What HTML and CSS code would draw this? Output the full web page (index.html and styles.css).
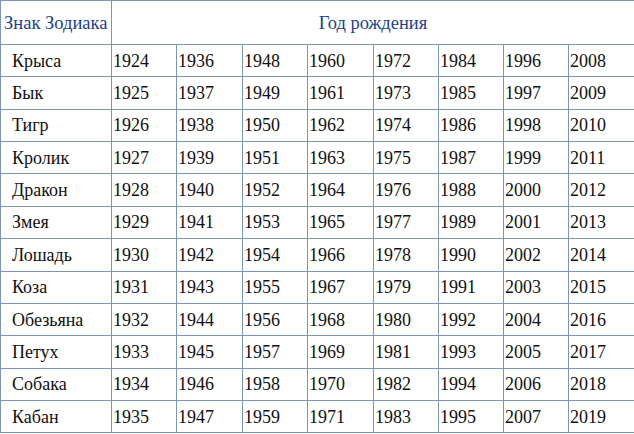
FILE: index.html
```html
<!DOCTYPE html>
<html lang="ru">
<head>
<meta charset="utf-8">
<link rel="stylesheet" href="styles.css">
</head>
<body>
<div class="zodiac">
  <div class="cell head sign-head">Знак Зодиака</div>
  <div class="cell head years-head">Год рождения</div>

  <div class="cell name">Крыса</div>
  <div class="cell">1924</div><div class="cell">1936</div><div class="cell">1948</div><div class="cell">1960</div><div class="cell">1972</div><div class="cell">1984</div><div class="cell">1996</div><div class="cell">2008</div>

  <div class="cell name">Бык</div>
  <div class="cell">1925</div><div class="cell">1937</div><div class="cell">1949</div><div class="cell">1961</div><div class="cell">1973</div><div class="cell">1985</div><div class="cell">1997</div><div class="cell">2009</div>

  <div class="cell name">Тигр</div>
  <div class="cell">1926</div><div class="cell">1938</div><div class="cell">1950</div><div class="cell">1962</div><div class="cell">1974</div><div class="cell">1986</div><div class="cell">1998</div><div class="cell">2010</div>

  <div class="cell name">Кролик</div>
  <div class="cell">1927</div><div class="cell">1939</div><div class="cell">1951</div><div class="cell">1963</div><div class="cell">1975</div><div class="cell">1987</div><div class="cell">1999</div><div class="cell">2011</div>

  <div class="cell name">Дракон</div>
  <div class="cell">1928</div><div class="cell">1940</div><div class="cell">1952</div><div class="cell">1964</div><div class="cell">1976</div><div class="cell">1988</div><div class="cell">2000</div><div class="cell">2012</div>

  <div class="cell name">Змея</div>
  <div class="cell">1929</div><div class="cell">1941</div><div class="cell">1953</div><div class="cell">1965</div><div class="cell">1977</div><div class="cell">1989</div><div class="cell">2001</div><div class="cell">2013</div>

  <div class="cell name">Лошадь</div>
  <div class="cell">1930</div><div class="cell">1942</div><div class="cell">1954</div><div class="cell">1966</div><div class="cell">1978</div><div class="cell">1990</div><div class="cell">2002</div><div class="cell">2014</div>

  <div class="cell name">Коза</div>
  <div class="cell">1931</div><div class="cell">1943</div><div class="cell">1955</div><div class="cell">1967</div><div class="cell">1979</div><div class="cell">1991</div><div class="cell">2003</div><div class="cell">2015</div>

  <div class="cell name">Обезьяна</div>
  <div class="cell">1932</div><div class="cell">1944</div><div class="cell">1956</div><div class="cell">1968</div><div class="cell">1980</div><div class="cell">1992</div><div class="cell">2004</div><div class="cell">2016</div>

  <div class="cell name">Петух</div>
  <div class="cell">1933</div><div class="cell">1945</div><div class="cell">1957</div><div class="cell">1969</div><div class="cell">1981</div><div class="cell">1993</div><div class="cell">2005</div><div class="cell">2017</div>

  <div class="cell name">Собака</div>
  <div class="cell">1934</div><div class="cell">1946</div><div class="cell">1958</div><div class="cell">1970</div><div class="cell">1982</div><div class="cell">1994</div><div class="cell">2006</div><div class="cell">2018</div>

  <div class="cell name">Кабан</div>
  <div class="cell">1935</div><div class="cell">1947</div><div class="cell">1959</div><div class="cell">1971</div><div class="cell">1983</div><div class="cell">1995</div><div class="cell">2007</div><div class="cell">2019</div>
</div>
</body>
</html>
```
FILE: styles.css
```css
html, body {
  margin: 0;
  padding: 0;
  background: #ffffff;
  overflow: hidden;
}

body {
  font-family: "Liberation Serif", serif;
}

.zodiac {
  display: grid;
  grid-template-columns: 111px 65px 66px 65px 66px 65px 65px 65px 66px;
  grid-template-rows: 44px repeat(12, 32.36px);
  width: max-content;
  border-top: 1px solid #7b97b6;
  border-left: 1px solid #7b97b6;
  color: #111111;
}

.cell {
  box-sizing: border-box;
  display: flex;
  align-items: center;
  padding-left: 1px;
  padding-top: 1px;
  border-right: 1px solid #7b97b6;
  border-bottom: 1px solid #7b97b6;
  white-space: nowrap;
  font-family: "Liberation Serif", serif;
  font-size: 18px;
}

.head {
  color: #233f8c;
  font-size: 18.5px;
  padding-top: 2px;
}

.sign-head {
  padding-left: 3px;
}

.years-head {
  grid-column: 2 / span 8;
  justify-content: center;
  padding-left: 0;
}

.name {
  padding-left: 11px;
}
```
